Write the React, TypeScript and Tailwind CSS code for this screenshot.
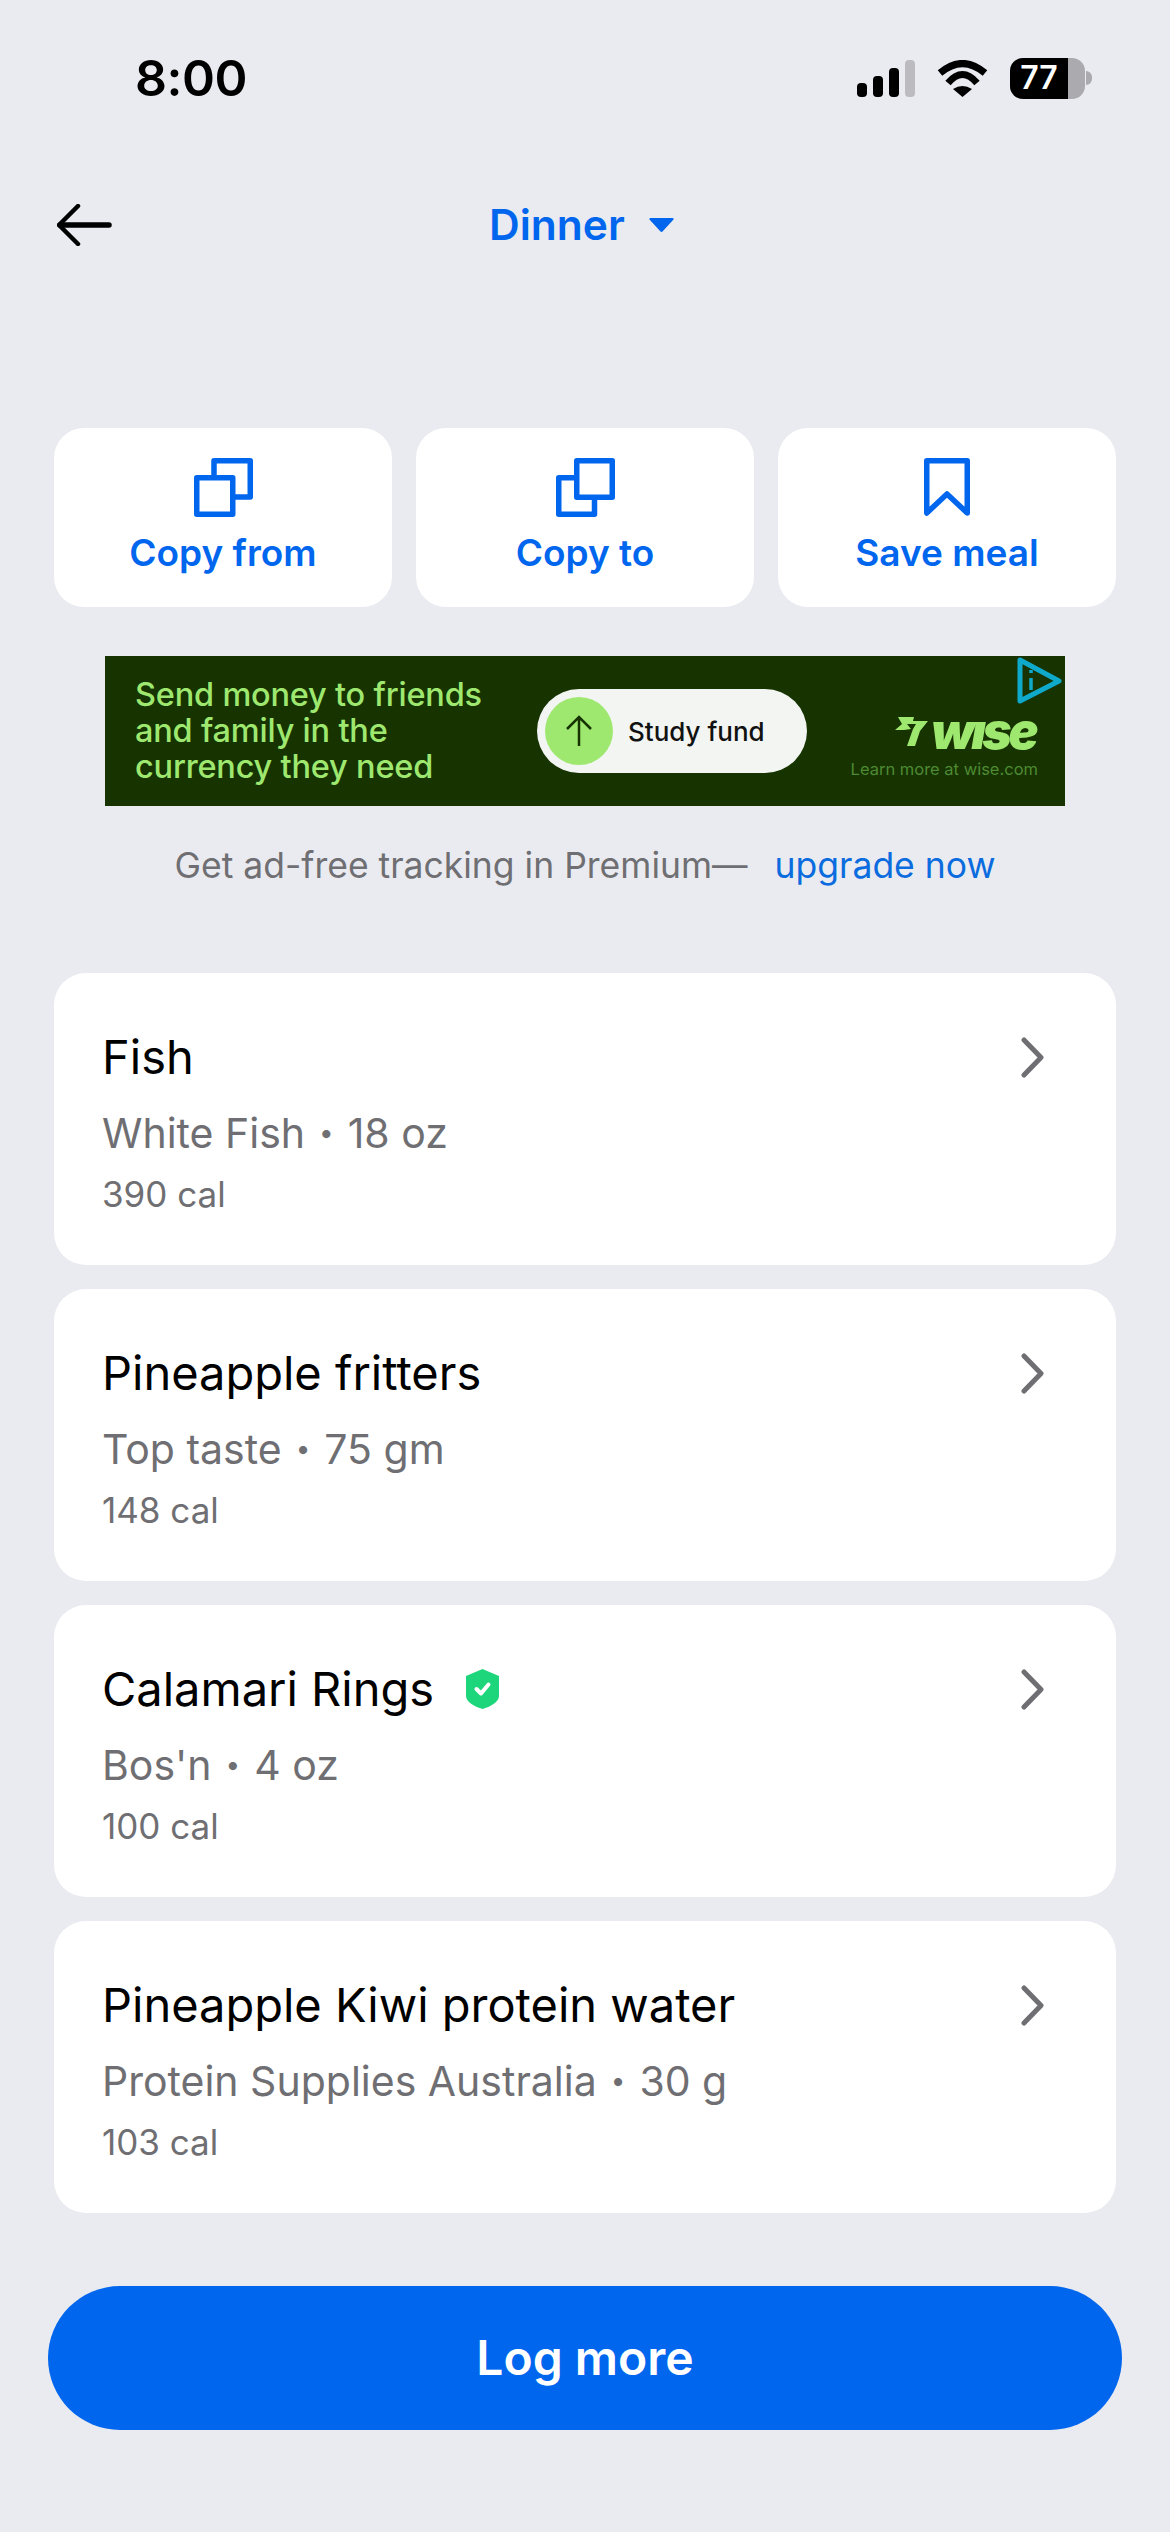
function CopyIcon({ front }: { front: boolean }) {
  return (
    <svg width="59" height="59" viewBox="0 0 59 59" fill="none" stroke="#0066EE" strokeWidth="5.500" strokeLinejoin="round">
      {front ? (
        <>
          <path d="M20 17V2.750H56.250V39H38" />
          <rect x="2.750" y="19.750" width="36" height="36.500" />
        </>
      ) : (
        <>
          <rect x="20.750" y="2.750" width="35.500" height="36.500" />
          <path d="M20 19.750H2.750V56.250H38.500V40" />
        </>
      )}
    </svg>
  )
}

function BookmarkIcon() {
  return (
    <svg width="46" height="59" viewBox="0 0 46 59" fill="none" stroke="#0066EE" strokeWidth="5.500" strokeLinejoin="round">
      <path d="M2.750 2.750H43.250V55L23 36L2.750 55V2.750Z" />
    </svg>
  )
}

function ActionButton({ label, icon }: { label: string; icon: React.ReactNode }) {
  return (
    <div className="w-[338px] h-[179px] bg-white rounded-[30px] flex flex-col items-center pt-[30px]">
      <div className="h-[59px] flex items-center">{icon}</div>
      <span className="mt-[14px] text-[37px] leading-[44px] font-semibold text-[#0066EE] whitespace-nowrap">{label}</span>
    </div>
  )
}

function Shield() {
  return (
    <svg width="33" height="40" viewBox="0 0 33 40" className="ml-[32px]">
      <path d="M16.500 0L33 7V27C33 33 24 38 16.500 40C9 38 0 33 0 27V7L16.500 0Z" fill="#1DD67C" />
      <path d="M10.500 20L15 24.500L22.500 15.500" fill="none" stroke="white" strokeWidth="4" strokeLinecap="round" strokeLinejoin="round" />
    </svg>
  )
}

const foods = [
  { name: 'Fish', detail: 'White Fish', amount: '18 oz', cal: '390 cal', verified: false },
  { name: 'Pineapple fritters', detail: 'Top taste', amount: '75 gm', cal: '148 cal', verified: false },
  { name: 'Calamari Rings', detail: "Bos'n", amount: '4 oz', cal: '100 cal', verified: true },
  { name: 'Pineapple Kiwi protein water', detail: 'Protein Supplies Australia', amount: '30 g', cal: '103 cal', verified: false },
]

function FoodCard({ food }: { food: (typeof foods)[number] }) {
  return (
    <div className="h-[292px] bg-white rounded-[32px] pl-[48px] pr-[72px] pt-[53px] flex justify-between items-start">
      <div>
        <div className="h-[62px] flex items-center text-[47px] leading-[62px] text-black">
          <span>{food.name}</span>
          {food.verified && <Shield />}
        </div>
        <div className="mt-[20px] h-[50px] flex items-center text-[41px] leading-[50px] text-[#6f6f73]">
          <span>{food.detail}</span>
          <span className="mx-[14px] text-[26px]">•</span>
          <span>{food.amount}</span>
        </div>
        <div className="mt-[15px] text-[35px] leading-[42px] text-[#6f6f73]">{food.cal}</div>
      </div>
      <svg width="23" height="41" viewBox="0 0 23 41" fill="none" stroke="#6f6f73" strokeWidth="5" strokeLinecap="round" strokeLinejoin="round" className="mt-[11px]">
        <path d="M3 3L20 20.500L3 38" />
      </svg>
    </div>
  )
}

export default function App() {
  return (
    <div className="w-[1170px] h-[2532px] bg-[#EAEBF0] font-[Inter,sans-serif] overflow-hidden">
      {/* Status bar */}
      <div className="h-[156px] flex items-center justify-between pl-[135px] pr-[78px]">
        <span className="text-[50px] leading-none font-semibold text-black tracking-[-0.5px]">8:00</span>
        <div className="flex items-center">
          <svg width="58" height="37" viewBox="0 0 58 37">
            <rect x="0" y="23" width="10" height="14" rx="4" fill="black" />
            <rect x="16" y="16" width="10" height="21" rx="4" fill="black" />
            <rect x="32" y="8" width="10" height="29" rx="4" fill="black" />
            <rect x="48" y="0" width="10" height="37" rx="4" fill="#BCBCC0" />
          </svg>
          <svg width="51" height="37" viewBox="0 0 51 37" fill="none" className="ml-[22px]">
            <path d="M3 13Q25.500 -6 48 13" stroke="black" strokeWidth="7" />
            <path d="M11 23Q25.500 6 40 23" stroke="black" strokeWidth="7" />
            <path d="M16 29Q25.500 23 35 29L25.500 37Z" fill="black" />
          </svg>
          <div className="ml-[22px] w-[75px] h-[41px] rounded-[13px] bg-[#ABABAF] overflow-hidden">
            <div className="w-[58px] h-full bg-black flex items-center justify-center text-[32px] leading-none font-semibold text-white">77</div>
          </div>
          <div className="ml-[1px] w-[6px] h-[14px] rounded-r-full bg-[#ABABAF]" />
        </div>
      </div>

      {/* Nav */}
      <div className="h-[138px] flex items-center pl-[57px] relative">
        <svg width="55" height="42" viewBox="0 0 55 42" fill="none" stroke="black" strokeLinecap="round" strokeLinejoin="round">
          <path d="M3 21H52" strokeWidth="5.500" />
          <path d="M21 2L2 21L21 40" strokeWidth="4.500" />
        </svg>
        <div className="ml-[377px] flex items-center">
          <span className="text-[42.500px] leading-none font-semibold text-[#0066EE]">Dinner</span>
          <svg width="25" height="14" viewBox="0 0 25 14" className="ml-[24px]">
            <path d="M1.500 0H23.500C24.500 0 25 1 24.300 1.800L13.500 13.500C13 14 12 14 11.500 13.500L0.700 1.800C0 1 0.500 0 1.500 0Z" fill="#0066EE" />
          </svg>
        </div>
      </div>

      {/* Actions */}
      <div className="mt-[134px] px-[54px] flex gap-[24px]">
        <ActionButton label="Copy from" icon={<CopyIcon front />} />
        <ActionButton label="Copy to" icon={<CopyIcon front={false} />} />
        <ActionButton label="Save meal" icon={<BookmarkIcon />} />
      </div>

      {/* Ad */}
      <div className="mt-[49px] ml-[105px] w-[960px] h-[150px] bg-[#163300] flex items-center relative">
        <div className="w-[432px] pl-[30px] text-[32.500px] leading-[36px] font-medium text-[#9FE870] whitespace-nowrap tracking-[-0.2px]">
          <div>Send money to friends</div>
          <div>and family in the</div>
          <div>currency they need</div>
        </div>
        <div className="w-[270px] h-[84px] rounded-full bg-[#F2F5F2] flex items-center pl-[8px]">
          <div className="w-[68px] h-[68px] rounded-full bg-[#9FE870] flex items-center justify-center">
            <svg width="28" height="32" viewBox="0 0 28 32" fill="none" stroke="#163300" strokeWidth="2.500">
              <path d="M14 31V2M2 14L14 2L26 14" />
            </svg>
          </div>
          <span className="ml-[15px] text-[26px] font-medium text-[#111] whitespace-nowrap">Study fund</span>
        </div>
        <div className="flex-1 self-start flex flex-col items-end pr-[27px] pt-[57px]">
          <div className="flex items-center h-[36px] pr-[3px]">
            <svg width="34" height="30" viewBox="0 0 34 30" className="mr-[3px]">
              <path d="M4 1H20L19 5H14L21 5H34L26 15L21 30H13L19 13L22 8H13L17 13L10 14L1 14L8 8Z" fill="#9FE870" />
            </svg>
            <span className="text-[50px] leading-none font-black italic text-[#9FE870] tracking-[-3.500px]">wıse</span>
          </div>
          <span className="mt-[7px] text-[16.500px] leading-[26px] text-[#4E8A33] whitespace-nowrap">Learn more at wise.com</span>
        </div>
        <svg width="46" height="47" viewBox="0 0 46 47" fill="none" className="absolute right-[2px] top-[1px]" stroke="#0FA9CB">
          <path d="M3 3L42 24L3 44V3Z" strokeWidth="5" strokeLinejoin="round" />
          <path d="M14 21V33" strokeWidth="3.500" />
          <path d="M14 13V16" strokeWidth="3.500" />
        </svg>
      </div>

      {/* Premium nudge */}
      <div className="mt-[30px] h-[60px] flex items-center justify-center text-[35.500px] text-[#6f6f73]">
        <span>Get ad-free tracking in Premium—</span>
        <span className="ml-[27px] text-[#0A6CDE]">upgrade now</span>
      </div>

      {/* Foods */}
      <div className="mt-[77px] px-[54px] flex flex-col gap-[24px]">
        {foods.map((food) => (
          <FoodCard key={food.name} food={food} />
        ))}
      </div>

      {/* Log more */}
      <div className="mt-[73px] px-[48px]">
        <div className="h-[144px] rounded-[72px] bg-[#0066EE] flex items-center justify-center text-[48px] font-semibold text-white">
          Log more
        </div>
      </div>
    </div>
  )
}
